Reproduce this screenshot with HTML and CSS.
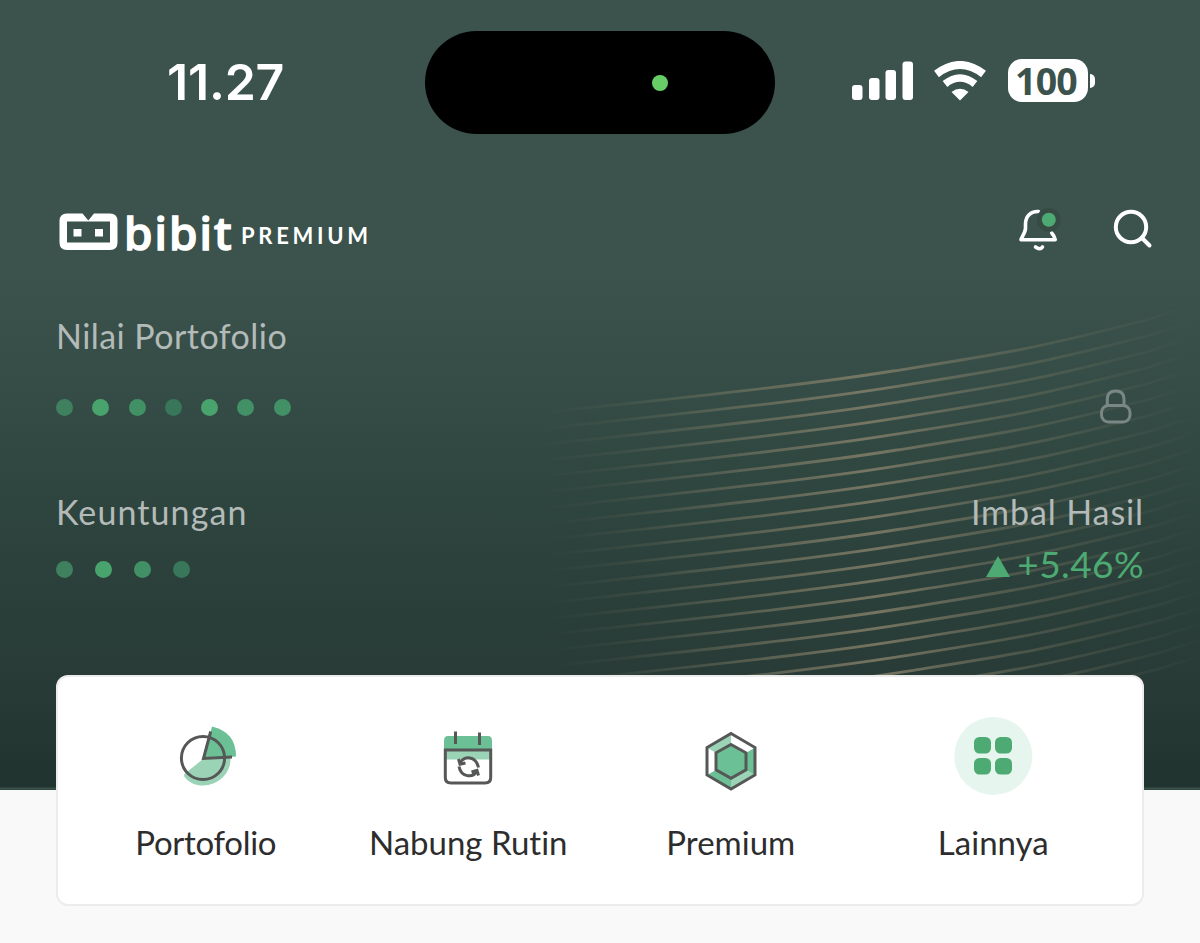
FILE: index.html
```html
<!DOCTYPE html>
<html lang="id">
<head>
<meta charset="utf-8">
<title>Bibit Premium</title>
<link rel="stylesheet" href="styles.css">
</head>
<body>
<main class="screen">
  <section class="hero">
    <svg class="waves" width="1200" height="790" viewBox="0 0 1200 790" aria-hidden="true">
      <defs>
        <linearGradient id="fade" gradientUnits="userSpaceOnUse" x1="540" y1="0" x2="1190" y2="0">
          <stop offset="0" stop-color="#85806a" stop-opacity="0"/>
          <stop offset=".12" stop-color="#85806a" stop-opacity=".13"/>
          <stop offset=".3" stop-color="#85806a" stop-opacity=".48"/>
          <stop offset=".5" stop-color="#85806a" stop-opacity=".82"/>
          <stop offset=".7" stop-color="#85806a" stop-opacity=".4"/>
          <stop offset=".88" stop-color="#85806a" stop-opacity=".14"/>
          <stop offset="1" stop-color="#85806a" stop-opacity="0"/>
        </linearGradient>
      </defs>
      <g id="lines" fill="none" stroke="url(#fade)" stroke-width="2.8"></g>
    </svg>

    <div class="status">
      <div class="clock">11.27</div>
      <div class="island"><span class="island-dot"></span></div>
      <div class="signals">
        <svg width="62" height="42" viewBox="0 0 62 42" fill="#fff">
          <rect x="1" y="25" width="10.500" height="15" rx="3"/>
          <rect x="18" y="18" width="10.500" height="22" rx="3"/>
          <rect x="34.500" y="10" width="10.500" height="30" rx="3"/>
          <rect x="51.500" y="1.500" width="10.500" height="38.500" rx="3"/>
        </svg>
        <svg class="wifi" width="54" height="40" viewBox="0 0 54 40" fill="none" stroke="#fff">
          <path d="M3.500 13Q27-5 50.500 13" stroke-width="8" stroke-linejoin="round"/>
          <path d="M12 23Q27 11 42 23" stroke-width="7.500"/>
          <path d="M18.500 31Q27 24.500 35.500 31L27 39.500Z" fill="#fff" stroke="none"/>
        </svg>
        <div class="battery">100</div>
        <span class="battery-tip"></span>
      </div>
    </div>

    <div class="brandbar">
      <svg width="59" height="38" viewBox="0 0 59 38">
        <path d="M8 .5H23.500L29.300 7.500 35 .5H51Q58.500.5 58.500 8V29.500Q58.500 37 51 37H8Q.5 37 .5 29.500V8Q.5.5 8 .5Z" fill="#fff"/>
        <path d="M8 8.500H51V29.500H8Z" fill="#3b534c"/>
        <path d="M14.500 16H22.500V23.500H14.500ZM36 16H44V23.500H36Z" fill="#fff"/>
      </svg>
      <span class="brand">bibit</span>
      <span class="tier">PREMIUM</span>
      <div class="actions">
        <svg width="46" height="46" viewBox="0 0 46 46" fill="none" stroke="#fff" stroke-width="3.600" stroke-linecap="round" stroke-linejoin="round">
          <path d="M21.500 3.500C13 3 8.500 9 8.500 16V20C8.500 25 4.500 29 4 31.700H38.200Q37.500 28 34.700 25"/>
          <path d="M18.500 39Q23 42.500 25.500 39"/>
          <circle cx="31.800" cy="11.800" r="12" fill="#364b44" stroke="none"/>
          <circle cx="31.800" cy="11.800" r="7" fill="#4caa72" stroke="none"/>
        </svg>
        <svg width="42" height="42" viewBox="0 0 42 42" fill="none" stroke="#fff" stroke-width="4" stroke-linecap="round">
          <circle cx="19" cy="19" r="15.200"/><path d="M30 30L37.500 37.500"/>
        </svg>
      </div>
    </div>

    <div class="label portfolio-label"><span class="t-nilai">Nilai Portofolio</span></div>
    <div class="portfolio-row">
      <div class="dots wide"><i class="d2"></i><i class="d4"></i><i class="d3"></i><i class="d1"></i><i class="d4"></i><i class="d3"></i><i class="d3"></i></div>
      <svg width="34" height="36" viewBox="0 0 34 36" fill="none" stroke="#7b8784" stroke-width="3">
        <rect x="2.500" y="16.500" width="28.500" height="16.500" rx="7"/><path d="M8.300 16.500V10Q8.300 2 16.600 2T25 10V16.500"/>
      </svg>
    </div>
    <div class="label profit-label"><span class="t-profit">Keuntungan</span><span class="t-yield">Imbal Hasil</span></div>
    <div class="profit-row">
      <div class="dots"><i class="d2"></i><i class="d4"></i><i class="d3"></i><i class="d1"></i></div>
      <div class="gain"><svg width="24" height="21" viewBox="0 0 24 21"><path d="M12 0L24 21H0Z" fill="#4caa72"/></svg><span>+5.46%</span></div>
    </div>
  </section>

  <nav class="card">
    <a class="item">
      <svg width="80" height="80" viewBox="0 0 80 80">
        <path d="M37 43L18.500 58Q17.500 60 19 61.500C24 67.500 31 69.700 37 69.500C53 69 65 57 64.500 42Z" fill="#9bd3b7"/>
        <path d="M37.500 43L46 10.500Q70 16 70 40.500Z" fill="#6bc195"/>
        <circle cx="37" cy="42" r="21.600" fill="none" stroke="#565857" stroke-width="3"/>
        <path d="M44.700 15.500L37.500 42.500 66 41" fill="none" stroke="#565857" stroke-width="3"/>
      </svg><span class="t-porto">Portofolio</span>
    </a>
    <a class="item">
      <svg width="80" height="80" viewBox="0 0 80 80">
        <path d="M16 33V25Q16 20 20 20H60Q64 20 64 25V33Z" fill="#6bc195"/>
        <path d="M17 34H63V43.500H17Z" fill="#9bd3b7"/>
        <path d="M17.300 34H62.700V61.500Q62.700 67 57 67H23Q17.300 67 17.300 61.500Z" fill="none" stroke="#565857" stroke-width="3"/>
        <path d="M27.500 15.500V28M51.500 16.500V29M32 47.500C36 39 48 40 50.500 51.500M49 54.500C45 63 33 61 31 50.500M30.500 43L32 48.200 37.500 47M50.500 59.500L49 54.300 43.500 56" fill="none" stroke="#565857" stroke-width="3"/>
      </svg><span>Nabung Rutin</span>
    </a>
    <a class="item">
      <svg width="80" height="80" viewBox="0 0 80 80">
        <path d="M16 31.500L40 17.500V29L25 37ZM40 62L55 54 64 59 40 73Z" fill="#9bd3b7"/>
        <path d="M64 31.500V59L55 54V37ZM16 59L25 54 40 62V73Z" fill="#6bc195"/>
        <path d="M40 28.500L55 36.800V53.800L40 62.300 25 53.800V36.800Z" fill="#6bc195"/>
        <path d="M40 17.500L64 31.500V59L40 73 16 59V31.500ZM40 28.500L55 36.800V53.800L40 62.300 25 53.800V36.800Z" fill="none" stroke="#565857" stroke-width="3"/>
      </svg><span>Premium</span>
    </a>
    <a class="item">
      <svg width="80" height="80" viewBox="0 0 80 80">
        <circle cx="40.300" cy="40" r="39" fill="#e6f5ee"/>
        <g fill="#4caa72"><rect x="21" y="21" width="17" height="16.500" rx="5.500"/><rect x="42" y="21" width="17" height="16.500" rx="5.500"/><rect x="21" y="42" width="17" height="16.500" rx="5.500"/><rect x="42" y="42" width="17" height="16.500" rx="5.500"/></g>
      </svg><span>Lainnya</span>
    </a>
  </nav>
</main>
<script src="waves.js"></script>
</body>
</html>
```
FILE: styles.css
```css
* { box-sizing: border-box; }
body { margin: 0; background: #f9f9f9; font-family: Lato, sans-serif; font-variant-ligatures: none; }
.screen { width: 1200px; height: 943px; overflow: hidden; }
.hero {
  position: relative;
  height: 790px;
  padding-top: 31px;
  background: linear-gradient(#3b534c 0, #3b534c 270px, #344c45 400px, #2e443e 510px, #293c37 660px, #20332e 787px, #3b534c 788px, #304740 790px);
}
.waves { position: absolute; inset: 0; }
.status { position: relative; display: grid; grid-template-columns: 425px 350px 425px; height: 103px; align-items: center; }
.clock { padding-left: 167px; margin-top: -2px; font: 600 50px/60px Inter, sans-serif; letter-spacing: -0.2px; color: #fff; }
.island { height: 103px; border-radius: 52px; background: #000; display: flex; align-items: center; justify-content: flex-end; padding-right: 107px; }
.island-dot { width: 16px; height: 16px; border-radius: 50%; background: #67ce67; }
.signals { display: flex; align-items: center; padding-left: 76px; height: 50px; margin-top: -4px; }
.wifi { margin-left: 20px; }
.battery { width: 80px; height: 43px; margin-left: 21px; padding-right: 4px; border-radius: 14px; background: #fff; color: #3b534c; font: 700 37.500px/43px "Open Sans", sans-serif; text-align: center; letter-spacing: -.8px; }
.battery-tip { width: 5px; height: 14px; margin-left: 2px; border-radius: 0 7px 7px 0; background: #fff; }
.brandbar { position: relative; display: flex; align-items: center; height: 50px; margin-top: 73px; padding: 0 46px 0 59px; color: #fff; }
.brand { width: 115px; padding-left: 6px; font: 500 46px/50px "Noto Sans", sans-serif; letter-spacing: 2px; -webkit-text-stroke: 1.500px #fff; stroke-linejoin: round; }
.tier { font: 700 22px/30px Lato, sans-serif; letter-spacing: 3.700px; margin-top: 8px; padding-left: 8px; }
.actions { display: flex; gap: 49px; margin-left: auto; margin-top: -2px; }
.label { position: relative; display: flex; justify-content: space-between; height: 44px; padding: 0 56px; font-size: 34px; line-height: 44px; color: #b3bab8; white-space: nowrap; }
.portfolio-label { margin-top: 57px; }
.portfolio-row { position: relative; display: flex; align-items: center; justify-content: space-between; height: 36px; margin-top: 31px; padding: 0 67px 0 56px; }
.dots { display: flex; gap: 22px; }
.dots.wide { gap: 19.300px; }
.dots i { width: 17px; height: 17px; border-radius: 50%; }
.d1 { background: #39775a; }
.d2 { background: #3f805e; }
.d3 { background: #429065; }
.d4 { background: #49a36c; }
.profit-label { margin-top: 65px; }
.profit-row { position: relative; display: flex; align-items: center; justify-content: space-between; height: 46px; margin-top: 12px; padding: 0 56px; }
.gain { display: flex; align-items: center; gap: 7px; margin-top: -6px; font-size: 37px; line-height: 46px; letter-spacing: .4px; color: #4caa72; }
.gain span { margin-top: -4px; }
.card { position: relative; display: grid; grid-template-columns: repeat(4, 262.500px); justify-content: center; width: 1088px; height: 231px; margin: -115px 56px 0; padding-top: 39px; padding-right: 1px; border: 2px solid #ececec; border-radius: 12px; background: #fff; }
.item { display: flex; flex-direction: column; align-items: center; color: #2d2d2d; font-size: 33px; line-height: 44px; white-space: nowrap; }
.item span { margin-top: 24px; }
.t-nilai { letter-spacing: .45px; }
.t-profit { letter-spacing: 1.100px; }
.t-yield { letter-spacing: .9px; }
.t-porto { letter-spacing: -.3px; }
```
FILE: waves.js
```js
const group = document.getElementById("lines");
for (let i = 0; i < 23; i += 1) {
  const path = document.createElementNS("http://www.w3.org/2000/svg", "path");
  path.setAttribute("d", "M540 413C660 400 800 386 893 371C1000 354 1030 350 1146 320L1190 306");
  path.setAttribute("transform", `translate(${i * 0.8} ${i * 15.8})`);
  group.appendChild(path);
}
```
